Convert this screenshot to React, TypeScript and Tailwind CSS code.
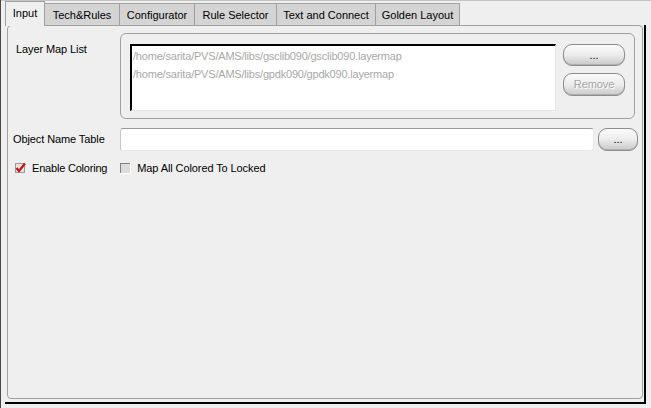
import React from 'react';

const tabs = [
  { label: 'Input', w: 'w-[40px]', active: true },
  { label: 'Tech&Rules', w: 'w-[75px]' },
  { label: 'Configurator', w: 'w-[75px]' },
  { label: 'Rule Selector', w: 'w-[82px]' },
  { label: 'Text and Connect', w: 'w-[99px]' },
  { label: 'Golden Layout', w: 'w-[84px]' },
];

const PillButton: React.FC<{ label: string; disabled?: boolean; className?: string }> = ({ label, disabled, className }) => (
  <button
    className={`flex items-center justify-center rounded-[9px] border border-[#8c8c8c] bg-gradient-to-b from-[#fbfbfb] via-[#ececec] to-[#c9c9c9] text-[11px] shadow-[inset_0_-1px_0_#b0b0b0] ${
      disabled ? 'text-[#a4a4a4] [text-shadow:1px_1px_0_#ffffff]' : 'text-black'
    } ${className ?? ''}`}
  >
    {label}
  </button>
);

const CheckedBox = () => (
  <svg width="12" height="12" viewBox="0 0 12 12">
    <rect x="0.5" y="1.5" width="9" height="9" fill="#e4e4e4" stroke="#9a9a9a" />
    <path d="M1.5 6 L4 9 L10 1.5" fill="none" stroke="#d01010" strokeWidth="2.2" />
  </svg>
);

const EmptyBox = () => (
  <svg width="11" height="11" viewBox="0 0 11 11">
    <rect x="0" y="0" width="11" height="11" fill="#ffffff" />
    <rect x="0" y="0" width="10" height="10" fill="#808080" />
    <rect x="1" y="1" width="9" height="9" fill="#dcdcdc" />
  </svg>
);

export default function App() {
  return (
    <div
      className="flex h-[408px] w-[651px] flex-col overflow-hidden border-l border-[#4e473e] bg-[#efefef] text-[11px] text-black"
      style={{ fontFamily: '"Liberation Sans", Arial, sans-serif' }}
    >
      {/* tab strip */}
      <div className="relative z-10 -mb-px flex h-[26px] items-end border-t border-[#c4c4c4] pl-[4px]">
        {tabs.map((t) =>
          t.active ? (
            <div
              key={t.label}
              className={`${t.w} flex h-[25px] items-center justify-center border border-b-0 border-[#a0a0a0] bg-[#efefef] pb-[1px]`}
            >
              {t.label}
            </div>
          ) : (
            <div
              key={t.label}
              className={`${t.w} flex h-[23px] items-center justify-center border border-l-0 border-[#a0a0a0] bg-[#d4d4d4] pt-[1px]`}
            >
              {t.label}
            </div>
          )
        )}
      </div>

      {/* pane with dark drop edge */}
      <div className="mb-[4px] ml-[4px] mr-[5px] flex flex-1 flex-col border-b-2 border-r-2 border-black">
        <div className="mb-[3px] ml-[2px] mr-[1px] flex flex-1 flex-col rounded-[4px] border border-[#a0a0a0] bg-[#efefef] tracking-[-0.1px]">
          {/* Layer Map List */}
          <div className="mt-[7px] flex">
            <div className="w-[112px] pl-[8px] pt-[8px]">Layer Map List</div>
            <div className="mr-[7px] flex flex-1 rounded-[6px] border border-[#a0a0a0] pb-[7px] pl-[9px] pr-[9px] pt-[10px]">
              <div className="flex h-[67px] flex-1 flex-col border-b border-l-2 border-r border-t-2 border-b-[#e6e6e6] border-l-black border-r-[#e6e6e6] border-t-black bg-white pl-[1px] pt-[1px] leading-[18px] tracking-[-0.2px] text-[#a8a8a8]">
                <div>/home/sarita/PVS/AMS/libs/gsclib090/gsclib090.layermap</div>
                <div>/home/sarita/PVS/AMS/libs/gpdk090/gpdk090.layermap</div>
              </div>
              <div className="ml-[7px] flex w-[62px] flex-col gap-[7px]">
                <PillButton label="..." className="h-[22px]" />
                <PillButton label="Remove" disabled className="h-[23px]" />
              </div>
            </div>
          </div>

          {/* Object Name Table */}
          <div className="mt-[9px] flex h-[23px] items-center">
            <div className="w-[112px] pl-[5px]">Object Name Table</div>
            <div className="h-[23px] flex-1 rounded-[3px] border border-[#e8e8e8] border-t-[#9a9a9a] border-l-[#c8c8c8] bg-white" />
            <PillButton label="..." className="ml-[4px] mr-[4px] h-[23px] w-[40px]" />
          </div>

          {/* check boxes */}
          <div className="mt-[10px] flex h-[14px] items-center">
            <div className="flex items-center pl-[7px]">
              <CheckedBox />
              <span className="ml-[5px] tracking-[-0.2px]">Enable Coloring</span>
            </div>
            <div className="ml-[13px] flex items-center">
              <EmptyBox />
              <span className="ml-[6px]">Map All Colored To Locked</span>
            </div>
          </div>
        </div>
      </div>
    </div>
  );
}
